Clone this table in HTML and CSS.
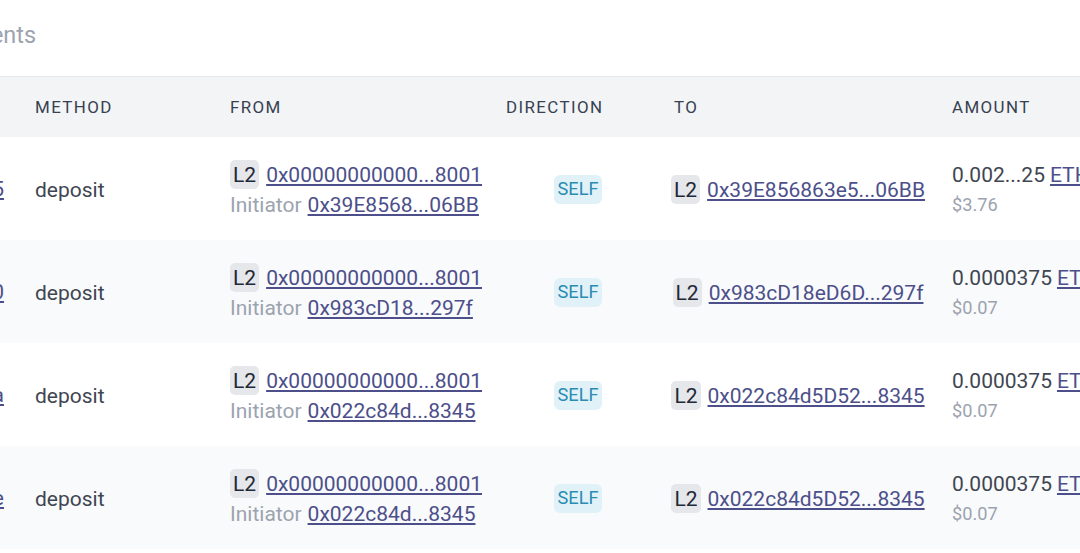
FILE: index.html
```html
<!DOCTYPE html>
<html>
<head>
<meta charset="utf-8">
<link rel="stylesheet" href="styles.css">
</head>
<body>
<div class="panel">
  <div class="title">Latest Transfer Payments</div>
  <div class="table">
    <div class="row head">
      <div class="cell hash-head">Hash</div>
      <div class="cell">Method</div>
      <div class="cell">From</div>
      <div class="cell">Direction</div>
      <div class="cell">To</div>
      <div class="cell">Amount</div>
    </div>

    <div class="row">
      <div class="cell hash"><a href="#">0x7b3e1c...a9c5</a></div>
      <div class="cell method">deposit</div>
      <div class="cell from">
        <div class="line"><span class="net">L2</span><a href="#">0x00000000000...8001</a></div>
        <div class="line sub">Initiator <a href="#">0x39E8568...06BB</a></div>
      </div>
      <div class="cell dir"><span class="self">SELF</span></div>
      <div class="cell to"><span class="net">L2</span><a href="#">0x39E856863e5...06BB</a></div>
      <div class="cell amount">
        <div class="line">0.002...25 <a href="#">ETH</a></div>
        <div class="usd">$3.76</div>
      </div>
    </div>

    <div class="row alt">
      <div class="cell hash"><a href="#">0x4f21d8...e620</a></div>
      <div class="cell method">deposit</div>
      <div class="cell from">
        <div class="line"><span class="net">L2</span><a href="#">0x00000000000...8001</a></div>
        <div class="line sub">Initiator <a href="#">0x983cD18...297f</a></div>
      </div>
      <div class="cell dir"><span class="self">SELF</span></div>
      <div class="cell to"><span class="net">L2</span><a href="#">0x983cD18eD6D...297f</a></div>
      <div class="cell amount">
        <div class="line">0.0000375 <a href="#">ETH</a></div>
        <div class="usd">$0.07</div>
      </div>
    </div>

    <div class="row">
      <div class="cell hash"><a href="#">0x9ac02b...c1fa</a></div>
      <div class="cell method">deposit</div>
      <div class="cell from">
        <div class="line"><span class="net">L2</span><a href="#">0x00000000000...8001</a></div>
        <div class="line sub">Initiator <a href="#">0x022c84d...8345</a></div>
      </div>
      <div class="cell dir"><span class="self">SELF</span></div>
      <div class="cell to"><span class="net">L2</span><a href="#">0x022c84d5D52...8345</a></div>
      <div class="cell amount">
        <div class="line">0.0000375 <a href="#">ETH</a></div>
        <div class="usd">$0.07</div>
      </div>
    </div>

    <div class="row alt">
      <div class="cell hash"><a href="#">0x1d6e5f...b83e</a></div>
      <div class="cell method">deposit</div>
      <div class="cell from">
        <div class="line"><span class="net">L2</span><a href="#">0x00000000000...8001</a></div>
        <div class="line sub">Initiator <a href="#">0x022c84d...8345</a></div>
      </div>
      <div class="cell dir"><span class="self">SELF</span></div>
      <div class="cell to"><span class="net">L2</span><a href="#">0x022c84d5D52...8345</a></div>
      <div class="cell amount">
        <div class="line">0.0000375 <a href="#">ETH</a></div>
        <div class="usd">$0.07</div>
      </div>
    </div>
  </div>
</div>
</body>
</html>
```

FILE: styles.css
```css
html, body {
  margin: 0;
  padding: 0;
  background: #ffffff;
  overflow: hidden;
}

body {
  font-family: Roboto, "Liberation Sans", sans-serif;
  color: #374151;
}

.panel {
  width: 1500px;
  margin-left: -240px;
}

.title {
  padding: 18px 0 23px 0;
  line-height: 35px;
  font-size: 23.4px;
  color: #9ca3af;
  display: flex;
  justify-content: flex-end;
  width: 276px;
}

.table {
  display: flex;
  flex-direction: column;
}

.row {
  display: grid;
  grid-template-columns: 259px 195px 276px 168px 278px 324px;
  height: 103px;
  background: #ffffff;
}

.row.alt {
  background: #f9fafb;
}

.row.head {
  height: 60px;
  background: #f3f4f6;
  border-top: 1px solid #e5e7eb;
}

.cell {
  padding: 0 16px;
  display: flex;
  flex-direction: column;
  justify-content: center;
  font-size: 21px;
  line-height: 30px;
  min-width: 0;
  white-space: nowrap;
}

.head .cell {
  font-size: 16.9px;
  letter-spacing: 1.4px;
  text-transform: uppercase;
  color: #374151;
}

.cell.hash {
  align-items: flex-end;
  padding-right: 15px;
}

.cell.hash-head {
  align-items: flex-start;
}

a {
  color: #4c4f8a;
  text-decoration: underline;
  text-underline-offset: 2px;
}

.method {
  color: #3f4652;
  padding-top: 2px;
}

.from {
  padding-top: 2px;
}

.line {
  display: flex;
  align-items: center;
  gap: 7px;
}

.line.sub {
  color: #9ca3af;
  gap: 6px;
}

.net {
  display: inline-flex;
  align-items: center;
  justify-content: center;
  height: 29px;
  padding: 0 3px;
  background: #e5e7eb;
  color: #1f2937;
  border-radius: 5px;
  box-sizing: border-box;
}

.cell.to {
  flex-direction: row;
  align-items: center;
  gap: 7px;
  padding-left: 18px;
  padding-top: 2px;
}

.cell.dir {
  flex-direction: row;
  align-items: center;
  justify-content: center;
  padding: 1px 8px 0 16px;
}

.self {
  display: inline-flex;
  align-items: center;
  justify-content: center;
  height: 29px;
  width: 48px;
  font-size: 18.2px;
  background: #e0f2f8;
  color: #2a8bb3;
  border-radius: 6px;
}

.amount {
  padding-top: 3px;
}

.amount .line {
  gap: 5px;
  color: #3f4652;
}

.usd {
  font-size: 18.2px;
  color: #9ca3af;
  line-height: 30px;
}
```
